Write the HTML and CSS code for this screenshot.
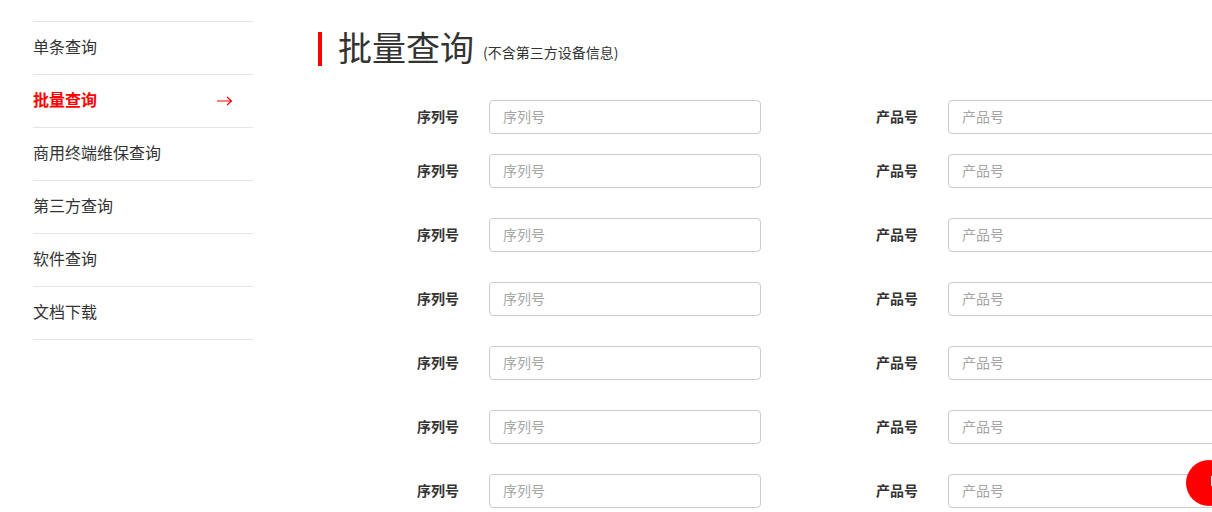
FILE: index.html
```html
<!DOCTYPE html>
<html lang="zh-CN">
<head>
<meta charset="utf-8">
<title>批量查询</title>
<link rel="stylesheet" href="styles.css">
</head>
<body>
<div class="page">
  <aside class="sidebar">
    <ul class="nav">
      <li class="nav-item"><a href="#">单条查询</a></li>
      <li class="nav-item active"><a href="#">批量查询<svg class="arrow" width="16" height="10" viewBox="0 0 16 10"><path d="M0 5H14M10 1L14.5 5L10 9" fill="none" stroke="#ff0000" stroke-width="1.2"/></svg></a></li>
      <li class="nav-item"><a href="#">商用终端维保查询</a></li>
      <li class="nav-item"><a href="#">第三方查询</a></li>
      <li class="nav-item"><a href="#">软件查询</a></li>
      <li class="nav-item"><a href="#">文档下载</a></li>
    </ul>
  </aside>
  <main class="main">
    <h1 class="title">批量查询<span class="subtitle">(不含第三方设备信息)</span></h1>
    <form class="form">
      <div class="row row-first">
        <div class="field"><label class="label">序列号</label><input class="input" placeholder="序列号"></div>
        <div class="field"><label class="label">产品号</label><input class="input" placeholder="产品号"></div>
      </div>
      <div class="row">
        <div class="field"><label class="label">序列号</label><input class="input" placeholder="序列号"></div>
        <div class="field"><label class="label">产品号</label><input class="input" placeholder="产品号"></div>
      </div>
      <div class="row">
        <div class="field"><label class="label">序列号</label><input class="input" placeholder="序列号"></div>
        <div class="field"><label class="label">产品号</label><input class="input" placeholder="产品号"></div>
      </div>
      <div class="row">
        <div class="field"><label class="label">序列号</label><input class="input" placeholder="序列号"></div>
        <div class="field"><label class="label">产品号</label><input class="input" placeholder="产品号"></div>
      </div>
      <div class="row">
        <div class="field"><label class="label">序列号</label><input class="input" placeholder="序列号"></div>
        <div class="field"><label class="label">产品号</label><input class="input" placeholder="产品号"></div>
      </div>
      <div class="row">
        <div class="field"><label class="label">序列号</label><input class="input" placeholder="序列号"></div>
        <div class="field"><label class="label">产品号</label><input class="input" placeholder="产品号"></div>
      </div>
      <div class="row">
        <div class="field"><label class="label">序列号</label><input class="input" placeholder="序列号"></div>
        <div class="field"><label class="label">产品号</label><input class="input" placeholder="产品号"></div>
      </div>
    </form>
  </main>
</div>
<div class="float-btn"><span class="float-mark"></span></div>
</body>
</html>
```

FILE: styles.css
```css
html, body {
  margin: 0;
  padding: 0;
  overflow: hidden;
  background: #fff;
}
body {
  font-family: "Microsoft YaHei", "Noto Sans CJK SC", "Noto Sans", sans-serif;
  color: #333;
}
.page {
  display: flex;
  padding: 21px 0 0 33px;
  width: 1500px;
}
.sidebar {
  width: 220px;
  flex: none;
}
.nav {
  list-style: none;
  margin: 0;
  padding: 0;
  border-top: 1px solid #e5e5e5;
}
.nav-item {
  border-bottom: 1px solid #e5e5e5;
}
.nav-item a {
  box-sizing: border-box;
  display: flex;
  align-items: center;
  justify-content: space-between;
  height: 52px;
  padding-bottom: 4px;
  font-size: 16px;
  color: #333;
  text-decoration: none;
  padding-right: 20px;
}
.nav-item.active a {
  color: #ff0000;
  font-weight: bold;
}
.arrow {
  display: block;
  margin-top: 4px;
}
.main {
  margin-left: 65px;
  flex: none;
}
.title {
  margin: 11px 0 0 0;
  height: 32px;
  padding-bottom: 2px;
  line-height: 34px;
  font-size: 34px;
  font-weight: normal;
  color: #333;
  border-left: 4px solid #ff0000;
  padding-left: 16px;
  display: flex;
  align-items: flex-end;
}
.subtitle {
  font-size: 14px;
  line-height: 20px;
  margin-left: 9px;
  margin-bottom: 2px;
}
.form {
  margin-top: 34px;
}
.row {
  display: flex;
  margin-bottom: 30px;
}
.row-first {
  margin-bottom: 20px;
}
.field {
  width: 459px;
  display: flex;
  align-items: center;
  gap: 30px;
}
.label {
  box-sizing: border-box;
  width: 141px;
  text-align: right;
  font-size: 14px;
  font-weight: bold;
  color: #333;
  padding-bottom: 2px;
}
.input {
  box-sizing: border-box;
  width: 272px;
  height: 34px;
  border: 1px solid #ccc;
  border-radius: 4px;
  padding: 0 13px 2px;
  font-size: 14px;
  font-family: inherit;
  color: #333;
  outline: none;
}
.input::placeholder {
  color: #a5a5a5;
}
.float-btn {
  position: fixed;
  right: -20px;
  bottom: 6px;
  width: 46px;
  height: 46px;
  border-radius: 50%;
  background: #ff0000;
}
.float-mark {
  position: absolute;
  left: 25px;
  top: 16px;
  width: 4px;
  height: 10px;
  background: #fff;
}
```
